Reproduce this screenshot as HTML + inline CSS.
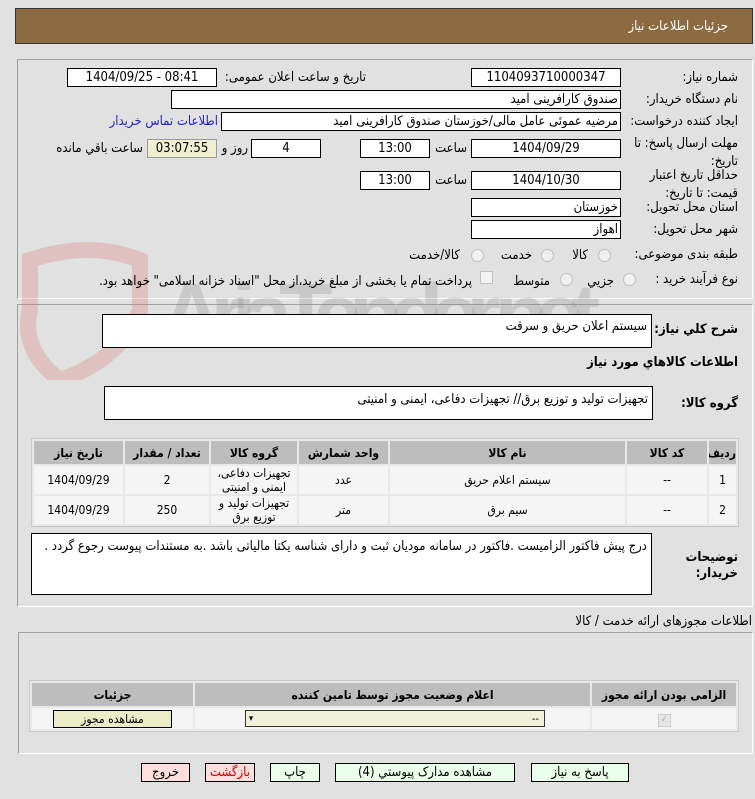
<!DOCTYPE html>
<html><head><meta charset="utf-8"><style>
body{margin:0;width:755px;height:799px;background:#e1e1e1;font-family:"DejaVu Sans Condensed","DejaVu Sans",sans-serif;font-size:12px;color:#000;position:relative;overflow:hidden}
.a{position:absolute}
.box{position:absolute;background:#fff;border:1px solid #000;box-sizing:border-box;font-size:13px;line-height:17px;white-space:nowrap;overflow:hidden}
.c{text-align:center}.r{text-align:right;direction:rtl;padding-right:2px}
.lbl{position:absolute;direction:rtl;text-align:right;white-space:nowrap;font-size:13px}
.panel{position:absolute;border:1px solid #a0a0a0;border-right-color:#fff;border-bottom-color:#fff;box-sizing:border-box}
table{border-collapse:separate;border-spacing:2px;position:absolute;background:#e8e8e8;border:1px solid #c8c8c8;direction:rtl;table-layout:fixed}
th{background:#bdbdbd;font-size:12px;font-weight:bold;height:23px;padding:0;white-space:nowrap;overflow:hidden}
td{background:#f5f5f5;text-align:center;font-size:12px;padding:0;white-space:nowrap}
.rad{position:absolute;width:11px;height:11px;border-radius:50%;border:1px solid #c0c0c0;background:#f0f0f0}
.btn{position:absolute;border:1px solid #000;box-sizing:border-box;height:19px;font-size:13px;text-align:center;line-height:17px;direction:rtl;white-space:nowrap;overflow:hidden}
.g{background:#eaffea}.p{background:#ffdede}
</style></head><body>
<div class="a" style="left:15px;top:8px;width:738px;height:36px;background:#8c6a42;border:1px solid #333;box-sizing:border-box"></div>
<div class="lbl" style="right:27px;top:19px;color:#fff">جزئیات اطلاعات نیاز</div>

<div class="panel" style="left:17px;top:59px;width:736px;height:240px"></div>
<div class="panel" style="left:17px;top:304px;width:736px;height:303px"></div>

<svg class="a" style="left:0;top:240px" width="620" height="140">
<path d="M30 20 Q90 0 140 20 L140 70 Q120 120 60 140 Q20 110 30 70 Z" fill="none" stroke="rgba(220,120,120,0.3)" stroke-width="16"/>
<text x="160" y="105" font-family="Liberation Sans" font-weight="bold" font-size="88" fill="rgba(140,140,140,0.28)" textLength="440">AriaTender.net</text>
</svg>

<div class="lbl" style="right:17px;top:70px">شماره نیاز:</div>
<div class="box c" style="left:471px;top:68px;width:150px;height:19px">1104093710000347</div>
<div class="lbl" style="right:389px;top:70px">تاریخ و ساعت اعلان عمومی:</div>
<div class="box c" style="left:67px;top:68px;width:150px;height:19px">1404/09/25 - 08:41</div>

<div class="lbl" style="right:17px;top:92px">نام دستگاه خریدار:</div>
<div class="box r" style="left:171px;top:90px;width:450px;height:19px">صندوق کارافرینی امید</div>

<div class="lbl" style="right:17px;top:114px">ایجاد کننده درخواست:</div>
<div class="box r" style="left:221px;top:112px;width:400px;height:19px">مرضیه عموئی عامل مالی/خوزستان صندوق کارافرینی امید</div>
<div class="lbl" style="right:537px;top:114px;color:#2222cc">اطلاعات تماس خریدار</div>

<div class="lbl" style="right:17px;top:135px;line-height:18px">مهلت ارسال پاسخ: تا<br>تاریخ:</div>
<div class="box c" style="left:471px;top:139px;width:150px;height:19px">1404/09/29</div>
<div class="lbl" style="right:288px;top:141px">ساعت</div>
<div class="box c" style="left:360px;top:139px;width:70px;height:19px">13:00</div>
<div class="box c" style="left:251px;top:139px;width:70px;height:19px">4</div>
<div class="lbl" style="right:507px;top:141px">روز و</div>
<div class="box c" style="left:147px;top:139px;width:70px;height:19px;background:#f0f0d0;border-color:#999">03:07:55</div>
<div class="lbl" style="right:612px;top:141px">ساعت باقي مانده</div>

<div class="lbl" style="right:17px;top:167px;line-height:18px">حداقل تاریخ اعتبار<br>قیمت: تا تاریخ:</div>
<div class="box c" style="left:471px;top:171px;width:150px;height:19px">1404/10/30</div>
<div class="lbl" style="right:288px;top:173px">ساعت</div>
<div class="box c" style="left:360px;top:171px;width:70px;height:19px">13:00</div>

<div class="lbl" style="right:17px;top:200px">استان محل تحویل:</div>
<div class="box r" style="left:471px;top:198px;width:150px;height:19px">خوزستان</div>
<div class="lbl" style="right:17px;top:222px">شهر محل تحویل:</div>
<div class="box r" style="left:471px;top:220px;width:150px;height:19px">اهواز</div>

<div class="lbl" style="right:17px;top:247px">طبقه بندی موضوعی:</div>
<div class="rad" style="left:598px;top:249px"></div>
<div class="lbl" style="right:167px;top:248px">کالا</div>
<div class="rad" style="left:541px;top:249px"></div>
<div class="lbl" style="right:223px;top:248px">خدمت</div>
<div class="rad" style="left:471px;top:249px"></div>
<div class="lbl" style="right:295px;top:248px">کالا/خدمت</div>

<div class="lbl" style="right:17px;top:272px">نوع فرآیند خرید :</div>
<div class="rad" style="left:623px;top:273px"></div>
<div class="lbl" style="right:141px;top:274px">جزيي</div>
<div class="rad" style="left:560px;top:273px"></div>
<div class="lbl" style="right:205px;top:274px">متوسط</div>
<div class="a" style="left:480px;top:271px;width:11px;height:11px;border:1px solid #c0c0c0;background:#f2f2f2"></div>
<div class="lbl" style="right:283px;top:274px">پرداخت تمام یا بخشی از مبلغ خرید،از محل "اسناد خزانه اسلامی" خواهد بود.</div>

<div class="lbl" style="right:17px;top:322px;font-weight:bold">شرح کلي نياز:</div>
<div class="box r" style="left:102px;top:314px;width:550px;height:34px;padding-right:4px;padding-top:3px">سیستم اعلان حریق و سرقت</div>
<div class="lbl" style="right:17px;top:355px;font-weight:bold">اطلاعات کالاهاي مورد نياز</div>
<div class="lbl" style="right:17px;top:396px;font-weight:bold">گروه کالا:</div>
<div class="box r" style="left:104px;top:386px;width:549px;height:34px;padding-right:4px;padding-top:4px">تجهیزات تولید و توزیع برق// تجهیزات دفاعی، ایمنی و امنیتی</div>

<table style="left:31px;top:438px;width:708px">
<colgroup><col style="width:27px"><col style="width:80px"><col style="width:235px"><col style="width:89px"><col style="width:86px"><col style="width:84px"><col></colgroup>
<tr><th>رديف</th><th>کد کالا</th><th>نام کالا</th><th>واحد شمارش</th><th>گروه کالا</th><th>تعداد / مقدار</th><th>تاريخ نياز</th></tr>
<tr style="height:28px"><td>1</td><td>--</td><td>سیستم اعلام حریق</td><td>عدد</td><td style="line-height:14px">تجهیزات دفاعی،<br>ایمنی و امنیتی</td><td>2</td><td>1404/09/29</td></tr>
<tr style="height:28px"><td>2</td><td>--</td><td>سیم برق</td><td>متر</td><td style="line-height:14px">تجهیزات تولید و<br>توزیع برق</td><td>250</td><td>1404/09/29</td></tr>
</table>

<div class="lbl" style="right:17px;top:550px;font-weight:bold;line-height:16px">توضیحات<br>خریدار:</div>
<div class="box r" style="left:31px;top:533px;width:621px;height:62px;padding-right:4px;padding-top:4px">درج پیش فاکتور الزامیست .فاکتور در سامانه مودیان ثبت و دارای شناسه یکتا مالیاتی باشد .به مستندات پیوست رجوع گردد .</div>

<div class="lbl" style="right:3px;top:614px">اطلاعات مجوزهای ارائه خدمت / کالا</div>
<div class="panel" style="left:18px;top:632px;width:735px;height:122px"></div>
<table style="left:29px;top:680px;width:710px">
<colgroup><col style="width:144px"><col><col style="width:161px"></colgroup>
<tr><th>الزامی بودن ارائه مجوز</th><th>اعلام وضعیت مجوز توسط تامین کننده</th><th>جزئیات</th></tr>
<tr style="height:21px"><td><span style="display:inline-block;width:11px;height:11px;border:1px solid #ccc;background:#e6e6e6;font-size:9px;color:#aaa;line-height:11px">✓</span></td>
<td style="direction:ltr;text-align:left"><div style="margin-left:50px;width:300px;height:17px;border:1px solid #333;background:#f0f0d8;position:relative;text-align:right;font-size:11px;line-height:16px;padding-right:5px;box-sizing:border-box">--<span style="position:absolute;left:3px;top:0;font-size:9px">▾</span></div></td>
<td style="direction:ltr;text-align:left"><div style="margin-left:21px;width:119px;height:18px;border:1px solid #000;background:#ececc8;box-sizing:border-box;line-height:16px;text-align:center">مشاهده مجوز</div></td></tr>
</table>

<div class="btn g" style="left:531px;top:763px;width:98px">پاسخ به نياز</div>
<div class="btn g" style="left:335px;top:763px;width:180px">مشاهده مدارک پيوستي (4)</div>
<div class="btn g" style="left:270px;top:763px;width:50px">چاپ</div>
<div class="btn p" style="left:205px;top:763px;width:50px;color:#c00">بازگشت</div>
<div class="btn p" style="left:141px;top:763px;width:49px">خروج</div>
</body></html>
